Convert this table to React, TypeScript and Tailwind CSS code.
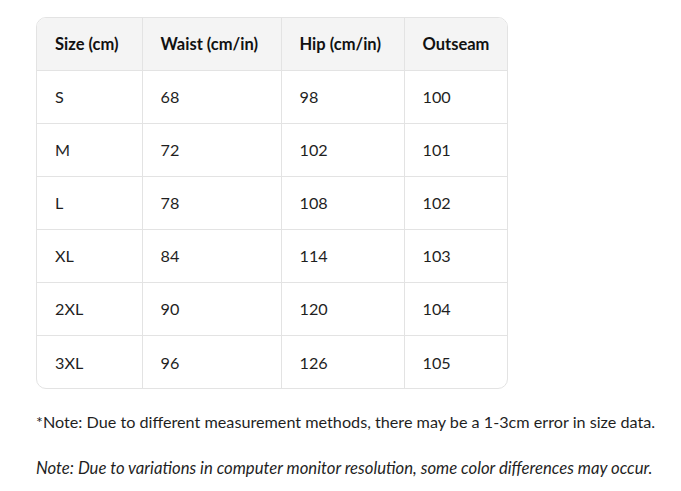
const headers = ["Size (cm)", "Waist (cm/in)", "Hip (cm/in)", "Outseam"];

const rows = [
  ["S", "68", "98", "100"],
  ["M", "72", "102", "101"],
  ["L", "78", "108", "102"],
  ["XL", "84", "114", "103"],
  ["2XL", "90", "120", "104"],
  ["3XL", "96", "126", "105"],
];

const colWidths = ["w-[105px]", "w-[139px]", "w-[123px]", "w-[104px]"];

export default function App() {
  return (
    <div className="min-h-[491px] w-[681px] bg-white px-[36px] pt-[17px] text-[16.2px] text-[#1f1f1f] font-['Lato','Open_Sans',sans-serif]">
      <div className="w-[472px] overflow-hidden rounded-[10px] border border-[#e3e3e3]">
        <table className="w-full table-fixed border-collapse">
          <thead>
            <tr className="h-[52px] bg-[#f4f4f4]">
              {headers.map((h, i) => (
                <th
                  key={h}
                  className={`${colWidths[i]} ${i > 0 ? "border-l border-[#e3e3e3]" : ""} pl-[18px] pt-[2px] text-left text-[16.5px] font-bold text-[#111]`}
                >
                  {h}
                </th>
              ))}
            </tr>
          </thead>
          <tbody>
            {rows.map((r) => (
              <tr key={r[0]} className="h-[53px] border-t border-[#e3e3e3]">
                {r.map((c, i) => (
                  <td
                    key={i}
                    className={`${i > 0 ? "border-l border-[#e3e3e3]" : ""} pl-[18px] pt-[2px]`}
                  >
                    {c}
                  </td>
                ))}
              </tr>
            ))}
          </tbody>
        </table>
      </div>
      <p className="mt-[22px] whitespace-nowrap leading-[22px]">
        *Note: Due to different measurement methods, there may be a 1-3cm error in size data.
      </p>
      <p className="mt-[24px] whitespace-nowrap text-[16.7px] italic leading-[22px]">
        Note: Due to variations in computer monitor resolution, some color differences may occur.
      </p>
    </div>
  );
}
